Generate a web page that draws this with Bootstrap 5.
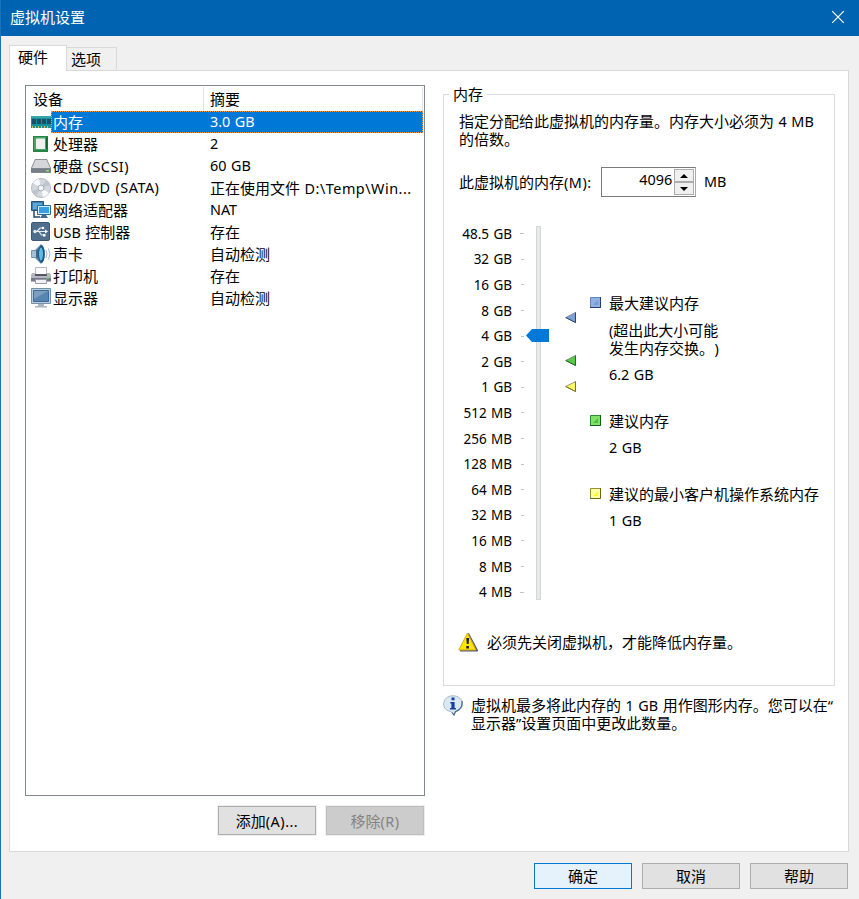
<!DOCTYPE html>
<html lang="zh-CN">
<head>
<meta charset="utf-8">
<meta name="viewport" content="width=device-width, initial-scale=1">
<title>虚拟机设置</title>
<link href="https://cdn.jsdelivr.net/npm/bootstrap@5.3.0/dist/css/bootstrap.min.css" rel="stylesheet">
<style>
body{font:15px/18px "Noto Sans CJK SC",sans-serif;word-spacing:1.2px;color:#000;background:#f0f0f0;width:859px;height:899px;overflow:hidden}
.en{font-family:"Noto Sans","Noto Sans CJK SC",sans-serif;font-size:14.4px;word-spacing:.8px}
span.en{line-height:1px}
.dev-text>.en,.mem-row>.en{line-height:inherit}
.wide{letter-spacing:.5px}
svg{display:block;flex:none}
.dialog-win{height:899px;border-left:1px solid #1a73ba}
.titlebar{height:36px;background:#0063b1;color:#fff;padding:0 14px 2px 9px}
.tabs{padding:9px 0 0 8px;height:34px}
.tab-on{width:58px;height:26px;background:#fff;border:1px solid #d9d9d9;border-bottom:0;padding:2px 0 0 8px;z-index:1;position:relative}
.tab-off{width:50px;height:23px;border:1px solid #d9d9d9;border-left:0;border-bottom:0;padding:2px 0 0 4px;margin-top:2px}
.pane{width:840px;height:782px;margin-left:8px;border:1px solid #d9d9d9;background:#fff;padding:14px 13px 0 15px;gap:18px}
.left-col{width:400px}
.devices{height:711px;border:1px solid #828790;padding:1px}
.dev-head{height:24px}
.dev-head .c1{width:177px;padding-left:6px;border-right:1px solid #e2e2e2;line-height:23px}
.dev-head .c2{width:219px;padding-left:6px;border-right:1px solid #e2e2e2;line-height:23px}
.dev{height:22px;padding-left:4px;line-height:22px}
.dev-text{padding-left:2px;flex:1;height:22px;white-space:nowrap}
.dev-name{width:157px}
.dev.on .dev-text{background:#0078d7;color:#fff;outline:1px dotted #ef9b4f;outline-offset:-1px}
.btn-win{--bs-btn-border-radius:0;--bs-btn-padding-x:0;--bs-btn-padding-y:0;--bs-btn-font-size:15px;--bs-btn-bg:#e1e1e1;--bs-btn-border-color:#adadad;--bs-btn-color:#000;--bs-btn-disabled-bg:#ccc;--bs-btn-disabled-border-color:#bfbfbf;--bs-btn-disabled-color:#838383;--bs-btn-disabled-opacity:1;width:98px;height:26px;line-height:24px}
.btn-tall{height:29px;line-height:25px;box-shadow:0 0 0 1px #eee}
.list-actions{gap:10px;margin:10px 1px 0 0}
.btn-ok{--bs-btn-bg:#e5f1fb;--bs-btn-border-color:#0078d7}
.right-col{width:392px;padding-top:9px}
.group{height:592px;border:1px solid #dcdcdc;padding:0 0 0 15px}
.group-title{width:38px;height:18px;margin:-10px 0 0 -10px;padding-left:4px;background:#fff}
.desc{margin-top:9px;height:37px;white-space:nowrap}
.mem-row{margin-top:18px;height:30px}
.mem-label{width:142px;white-space:nowrap}
.mem-box{width:95px;height:30px;border:1px solid #7a7a7a;border-right-color:#a9a9ad;padding:1px 1px 1px 0}
.mem-val{width:73px;text-align:right;line-height:21px;padding-right:2px}
.spin{width:20px}
.spin div{height:13px;border:1px solid #acacac;background:#f0f0f0;display:flex;align-items:center;justify-content:center}
.scale-row{margin-top:24px;height:384px}
.scale{width:65px;height:384px}
.scale div{flex:1;display:flex;align-items:center;justify-content:flex-end;gap:9px;font-size:13.5px;white-space:nowrap}
.scale i{flex:none;width:3px;height:1px;background:#c4c4c4}
.scale div:first-child,.scale div:last-child{gap:8px}
.scale div:first-child i,.scale div:last-child i{width:4px}
.track{width:5px;height:374px;margin:5px 0 0 12px;background:#e7eaea;border:1px solid #d6d6d6;position:relative}
.thumb{position:absolute;left:-11px;top:102px}
.marks{margin:91px 0 0 24px;width:11px}
.gap-green{margin-top:32px}
.gap-yellow{margin-top:15px}
.legends{margin:73px 0 0 14px}
.legends svg{margin-top:3px}
.legends .lt{margin-left:8px;white-space:nowrap}
.legend-line{margin-top:9px}
.legend-next{margin-top:28px}
.close-paren{margin-left:8px}
.warn{margin-top:27px;margin-left:-1px}
.warn-text{margin-left:9px}
.info{margin-top:9px}
.info-text{margin:1px 0 0 8px;white-space:nowrap}
.footer-btns{gap:10px;margin:11px 11px 0 0}
</style>
</head>
<body>
<div class="dialog-win">
<header class="titlebar d-flex align-items-center justify-content-between"><span>虚拟机设置</span>
<svg width="14" height="14" viewBox="0 0 14 14"><path d="M1.2 1.2l11.6 11.6M12.8 1.2L1.2 12.8" stroke="#fff" stroke-width="1.2"/></svg></header>
<nav class="tabs d-flex"><div class="tab-on">硬件</div><div class="tab-off">选项</div></nav>
<main class="pane d-flex">
<section class="left-col">
<div class="devices">
<div class="dev-head d-flex"><div class="c1">设备</div><div class="c2">摘要</div></div>
<div class="dev on d-flex align-items-center"><svg width="20" height="20" viewBox="0 0 20 20"><path d="M0 4h20v10H0z" fill="#16909b"/><path d="M0 4h20v2H0z" fill="#37a7a9"/><path d="M1 7h4v5H1zm5 0h4v5H6zm5 0h4v5h-4zm5 0h4v5h-4z" fill="#175269"/><path d="M0 14h20v2H0z" fill="#2c8b84"/><path d="M1 14h1v2H1zm3 0h1v2H4zm3 0h1v2H7zm3 0h1v2h-1zm3 0h1v2h-1zm3 0h1v2h-1z" fill="#ccbd70"/></svg><div class="dev-text d-flex"><span class="dev-name">内存</span><span class="en">3.0 GB</span></div></div>
<div class="dev d-flex align-items-center"><svg width="20" height="20" viewBox="0 0 20 20"><path d="M2 2h15v16H2z" fill="#268545"/><path d="M3 3h12v13H3z" fill="#45a564"/><rect x="5" y="4.500" width="9.500" height="10.500" rx="1" fill="#f0f1ef"/><path d="M14.500 5l2-2v13l-2-2z" fill="#0d6331"/></svg><div class="dev-text d-flex"><span class="dev-name">处理器</span><span class="en">2</span></div></div>
<div class="dev d-flex align-items-center"><svg width="20" height="20" viewBox="0 0 20 20"><path d="M4 3h12l4 9v4q0 1-1 1H1q-1 0-1-1v-4z" fill="#8b8f96"/><path d="M4.500 4h11l3.500 8H1z" fill="#d4d6da"/><path d="M0 12.500h20v4H0z" fill="#787c84"/><path d="M15 14h3v1.500h-3z" fill="#7ce36e"/></svg><div class="dev-text d-flex"><span class="dev-name">硬盘 <span class="en wide">(SCSI)</span></span><span class="en">60 GB</span></div></div>
<div class="dev d-flex align-items-center"><svg width="20" height="20" viewBox="0 0 20 20"><circle cx="10" cy="10" r="9.500" fill="#d3d8de" stroke="#b2b9c2"/><path d="M10 10L2 5A9 9 0 0 1 8 1zM10 10l8 5a9 9 0 0 1-6 4z" fill="#f7f9fb"/><path d="M10 10l5-8a9 9 0 0 1 3.500 5zM10 10l-5 8a9 9 0 0 1-3.500-5z" fill="#bdc4ce"/><circle cx="10" cy="10" r="3" fill="#edf1f4" stroke="#a3abb6"/><circle cx="10" cy="10" r="1" fill="#fff"/></svg><div class="dev-text d-flex"><span class="dev-name en wide">CD/DVD (SATA)</span><span>正在使用文件 <span class="en wide">D:\Temp\Win...</span></span></div></div>
<div class="dev d-flex align-items-center"><svg width="20" height="20" viewBox="0 0 20 20"><path d="M.5 1.500h12v9H.5z" fill="#3b7bad" stroke="#285377"/><path d="M2 3h9v6H2z" fill="#5babd9"/><path d="M3 11v6h6" fill="none" stroke="#234867" stroke-width="1.500"/><path d="M6.500 5.500h13v9h-13z" fill="#c9edff" stroke="#286998"/><path d="M8 7h10v6H8z" fill="#399fe3"/><path d="M11 15h4l2 3H9z" fill="#426b8c"/></svg><div class="dev-text d-flex"><span class="dev-name">网络适配器</span><span class="en">NAT</span></div></div>
<div class="dev d-flex align-items-center"><svg width="20" height="20" viewBox="0 0 20 20"><rect x=".5" y=".5" width="18" height="18" rx="1.500" fill="#4f6e8e" stroke="#3e5874"/><g stroke="#e6edf3" stroke-width="1.200" fill="none"><path d="M3 9.500h12M6 9.500l3-3.500h3M8 9.500l2.500 3.500H13"/></g><circle cx="4" cy="9.500" r="1.700" fill="#e6edf3"/><circle cx="12" cy="6" r="1.300" fill="#fff"/><path d="M14 7.500l3 2-3 2zM12 12h2.500v2.500H12z" fill="#fff"/></svg><div class="dev-text d-flex"><span class="dev-name"><span class="en">USB</span> 控制器</span><span>存在</span></div></div>
<div class="dev d-flex align-items-center"><svg width="20" height="20" viewBox="0 0 20 20"><path d="M0 7q0-1 1-1h3l6-6q4 4 4 10t-4 10l-6-6H1q-1 0-1-1z" fill="#7190a9"/><path d="M.8 7H5v6H.8z" fill="#a5bfd2"/><path d="M5 7l4-4v14l-4-4z" fill="#3c668c"/><ellipse cx="10.500" cy="10" rx="3.200" ry="9" fill="#1b568a"/><ellipse cx="10" cy="10" rx="2" ry="6.500" fill="#61b9e9"/><path d="M15 6q2 4 0 8M17.500 4.500q3 5.500 0 11" stroke="#a3b9ca" fill="none"/></svg><div class="dev-text d-flex"><span class="dev-name">声卡</span><span>自动检测</span></div></div>
<div class="dev d-flex align-items-center"><svg width="20" height="20" viewBox="0 0 20 20"><path d="M4.500 1.500h11v8h-11z" fill="#fafafa" stroke="#b5b8c0"/><path d="M1 7h3v2h12V7h3l1 2v7H0V9z" fill="#b5b6c1"/><path d="M4 8h12v2H4z" fill="#555766"/><path d="M0 12h20v3H0z" fill="#757889"/><path d="M4.500 13.500h11v4h-11z" fill="#f2f2f5" stroke="#9a9ba5"/><path d="M15 11h3v1.500h-3z" fill="#76d977"/></svg><div class="dev-text d-flex"><span class="dev-name">打印机</span><span>存在</span></div></div>
<div class="dev d-flex align-items-center"><svg width="20" height="20" viewBox="0 0 20 20"><path d="M.5.5h19v15H.5z" fill="#b9cadb" stroke="#7590a9"/><path d="M2.500 2.500h15v11h-15z" fill="#5784b0" stroke="#416a94"/><path d="M3 3h14L3 11z" fill="#7c9fc1"/><path d="M7 16h6v2h3v1.500H4V18h3z" fill="#aab6c1"/></svg><div class="dev-text d-flex"><span class="dev-name">显示器</span><span>自动检测</span></div></div>
</div>
<div class="list-actions d-flex justify-content-end"><button class="btn btn-win btn-tall">添加<span class="en wide">(A)...</span></button><button class="btn btn-win btn-tall" disabled>移除<span class="en wide">(R)</span></button></div>
</section>
<section class="right-col">
<div class="group">
<div class="group-title">内存</div>
<div class="desc">指定分配给此虚拟机的内存量。内存大小必须为 <span class="en">4 MB</span><br>的倍数。</div>
<div class="mem-row d-flex align-items-center"><div class="mem-label">此虚拟机的内存<span class="en wide">(M):</span></div>
<div class="mem-box d-flex"><div class="mem-val en">4096</div><div class="spin"><div><svg width="8" height="4"><path d="M0 4l4-4 4 4z"/></svg></div><div><svg width="8" height="4"><path d="M0 0h8L4 4z"/></svg></div></div></div><span class="en ms-2">MB</span></div>
<div class="scale-row d-flex">
<div class="scale d-flex flex-column en"><div>48.5 GB<i></i></div><div>32 GB<i></i></div><div>16 GB<i></i></div><div>8 GB<i></i></div><div>4 GB<i></i></div><div>2 GB<i></i></div><div>1 GB<i></i></div><div>512 MB<i></i></div><div>256 MB<i></i></div><div>128 MB<i></i></div><div>64 MB<i></i></div><div>32 MB<i></i></div><div>16 MB<i></i></div><div>8 MB<i></i></div><div>4 MB<i></i></div></div>
<div class="track"><svg class="thumb" width="23" height="13"><path d="M0 6.500L6 0h17v13H6z" fill="#0078d7"/></svg></div>
<div class="marks">
<svg width="11" height="11"><path d="M.7 5.500L10.500.5v10z" fill="#7ca2d6" stroke="#8a9097"/><path d="M10.500.5v10L.7 5.500" fill="none" stroke="#234778"/></svg>
<svg class="gap-green" width="11" height="11"><path d="M.7 5.500L10.500.5v10z" fill="#5bc847" stroke="#779477"/><path d="M10.500.5v10L.7 5.500" fill="none" stroke="#137318"/></svg>
<svg class="gap-yellow" width="11" height="11"><path d="M.7 5.500L10.500.5v10z" fill="#fbf762" stroke="#999976"/><path d="M10.500.5v10L.7 5.500" fill="none" stroke="#77751c"/></svg>
</div>
<div class="legends">
<div class="d-flex"><svg width="11" height="11"><path d="M.5.5h10v10H.5z" fill="#8eb2e1" stroke="#5f86b6"/><path d="M3 8l5-5v5z" fill="#759bd0"/><path d="M10.500 0v10.500H0" fill="none" stroke="#203f6e"/></svg><div class="lt">最大建议内存<div class="legend-line"><span class="en">(</span>超出此大小可能<br>发生内存交换。<span class="en close-paren">)</span></div><div class="en legend-line">6.2 GB</div></div></div>
<div class="legend-next d-flex"><svg width="11" height="11"><path d="M.5.5h10v10H.5z" fill="#83df68" stroke="#299030"/><path d="M3 8l5-5v5z" fill="#4fc23c"/><path d="M10.500 0v10.500H0" fill="none" stroke="#0b6513"/></svg><div class="lt">建议内存<div class="en legend-line">2 GB</div></div></div>
<div class="legend-next d-flex"><svg width="11" height="11"><path d="M.5.5h10v10H.5z" fill="#ffffa5" stroke="#94923a"/><path d="M3 8l5-5v5z" fill="#fcf73b"/><path d="M10.500 0v10.500H0" fill="none" stroke="#6d680d"/></svg><div class="lt">建议的最小客户机操作系统内存<div class="en legend-line">1 GB</div></div></div>
</div>
</div>
<div class="warn d-flex align-items-center"><svg width="20" height="20" viewBox="0 0 20 20"><path d="M10 1.500L19 18.500H2" fill="none" stroke="#4e547c" stroke-width="2" stroke-linejoin="round"/><path d="M9.500 1L18 18H.8z" fill="#ffe500" stroke="#d3ae0b" stroke-linejoin="round"/><path d="M8.300 6h2.800l-.5 6H8.800zM8.300 14h2.600v2.500H8.300z" fill="#151b45"/></svg><span class="warn-text">必须先关闭虚拟机，才能降低内存量。</span></div>
</div>
<div class="info d-flex"><svg width="20" height="21" viewBox="0 0 20 21"><path d="M10 .8c5.500 0 9.300 3.400 9.300 8.200 0 4.200-3 7-7 7.600L11 20l-3-3.500C3.500 16 .7 13 .7 9 .7 4.200 4.500.8 10 .8z" fill="#dbe9f5" stroke="#a3b8cb"/><path d="M19 6q1 8-6.500 10.500L11 20l-2-2.500" fill="none" stroke="#45688d" stroke-width="1.200"/><path d="M8.500 2.500h3v2.800h-3zM7.300 7h4.300v6h1.300v1.500H7V13h1.400V8.500H7.300z" fill="#163e9e"/></svg><div class="info-text">虚拟机最多将此内存的 <span class="en">1 GB</span> 用作图形内存。您可以在<span class="en">“</span><br>显示器<span class="en">”</span>设置页面中更改此数量。</div></div>
</section>
</main>
<footer class="footer-btns d-flex justify-content-end"><button class="btn btn-win btn-ok">确定</button><button class="btn btn-win">取消</button><button class="btn btn-win">帮助</button></footer>
</div>
<script src="https://cdn.jsdelivr.net/npm/bootstrap@5.3.0/dist/js/bootstrap.bundle.min.js"></script>
</body>
</html>
